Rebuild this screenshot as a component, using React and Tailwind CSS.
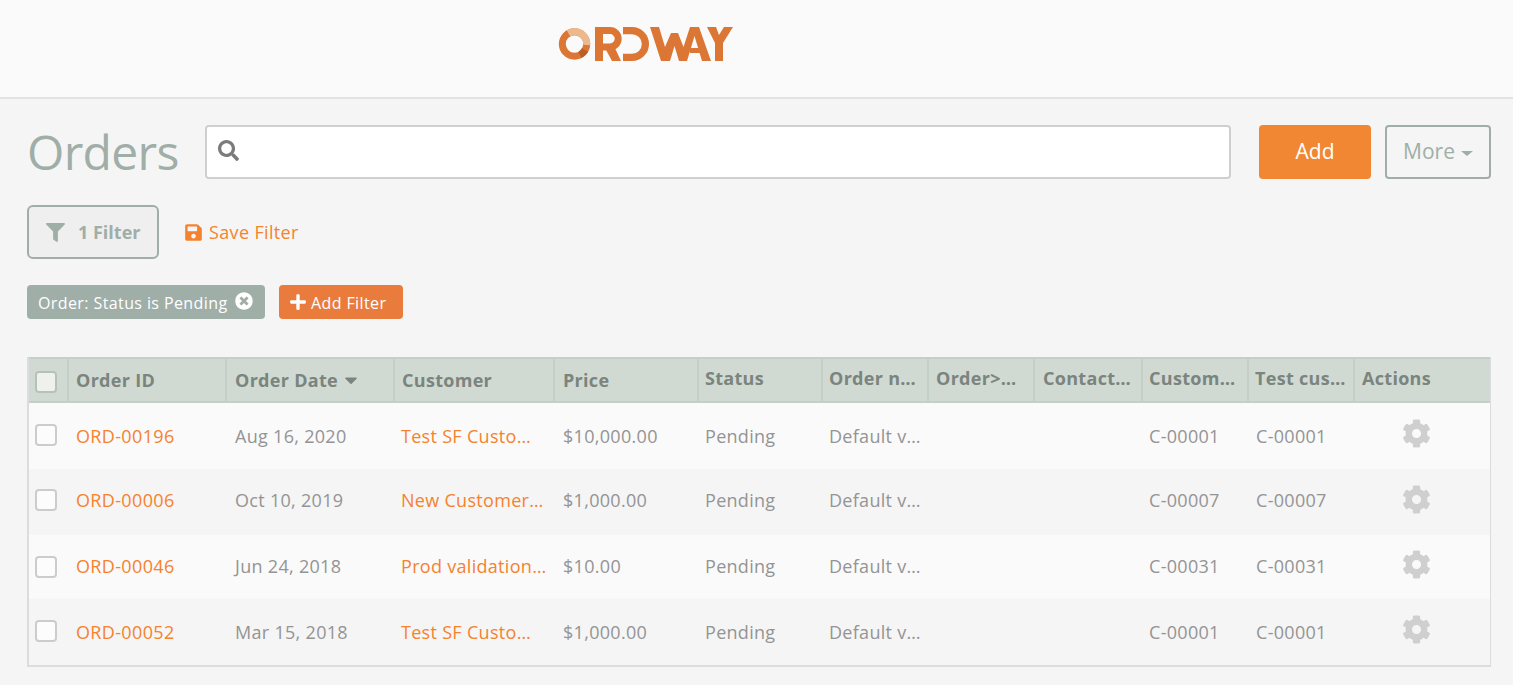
import React from "react";
import { FaSearch, FaFilter, FaSave, FaTimesCircle, FaPlus, FaCog, FaCaretDown } from "react-icons/fa";

const rows = [
  { id: "ORD-00196", date: "Aug 16, 2020", customer: "Test SF Customer 1", price: "$10,000.00", c: "C-00001", h: "h-[67px]", cell: "pb-0", box: "-mt-[2px]", gear: "-mt-[6px]" },
  { id: "ORD-00006", date: "Oct 10, 2019", customer: "New CustomerAccount", price: "$1,000.00", c: "C-00007", h: "h-[66px]", cell: "pb-[3px]", box: "-mt-[4px]", gear: "-mt-[6px]" },
  { id: "ORD-00046", date: "Jun 24, 2018", customer: "Prod validation customer", price: "$10.00", c: "C-00031", h: "h-[64px]", cell: "pb-[1px]", box: "-mt-[0px]", gear: "-mt-[6px]" },
  { id: "ORD-00052", date: "Mar 15, 2018", customer: "Test SF Customer 1", price: "$1,000.00", c: "C-00001", h: "h-[66px]", cell: "pt-[1px]", box: "-mt-[2px]", gear: "-mt-[6px]" },
];

const heads = [
  ["Order ID", "w-[158px]", "pl-[7px]"],
  ["Order Date", "w-[168px]", "pl-[8px]"],
  ["Customer", "w-[160px]", "pl-[7px]"],
  ["Price", "w-[144px]", "pl-[8px]"],
  ["Status", "w-[124px]", "pl-[6px]"],
  ["Order number", "w-[106px]", "pl-[6px]"],
  ["Order>Customer", "w-[106px]", "pl-[7px]"],
  ["Contact name", "w-[108px]", "pl-[8px]"],
  ["Customer ID", "w-[106px]", "pl-[6px]"],
  ["Test customer", "w-[106px]", "pl-[6px]"],
  ["Actions", "w-[136px]", "pl-[7px]"],
];

function Logo() {
  return (
    <svg width="176" height="35" viewBox="0 0 176 35" fill="none" aria-label="Ordway logo">
      <circle cx="16.5" cy="17" r="12.2" stroke="#dc7634" strokeWidth="7" />
      <path d="M10.5 6.4 A12.2 12.2 0 0 1 28.7 18" stroke="#ecb98f" strokeWidth="7" />
      <path d="M27 23 A12.2 12.2 0 0 1 22 28" stroke="#b96027" strokeWidth="7" />
      <rect x="37" y="0" width="8" height="34" fill="#dc7634" />
      <path d="M41 3.6 H52 A8.2 8.2 0 0 1 52 20 H45" stroke="#dc7634" strokeWidth="7" />
      <polygon points="47,21 56,19 63,34 54,34" fill="#dc7634" />
      <path d="M65 3.6 H74 A13.4 13.4 0 0 1 74 30.4 H65" stroke="#dc7634" strokeWidth="7.2" />
      <polygon points="92,0 101,0 107,20 113,6 120,6 125.5,20 132,0 141,0 153,34 144,34 136.5,9 129,34 121,34 116.5,19 112,34 103,34" fill="#dc7634" />
      <rect x="132" y="21" width="14" height="5" fill="#dc7634" />
      <polygon points="149,0 158,0 161,8 166,0 175,0 165,16 165,34 157,34 157,16" fill="#dc7634" />
    </svg>
  );
}

function Box({ header }) {
  return (
    <span
      className={`block w-[22px] h-[22px] rounded-[4px] border-2 ${
        header ? "border-[#b9c0ba] bg-[#eef1ee]" : "border-[#cccccc] bg-[#fcfcfc]"
      }`}
    />
  );
}

export default function App() {
  return (
    <div className="min-h-[685px] bg-[#f5f5f5] text-[18px] text-[#949494] font-['Open_Sans',sans-serif] overflow-hidden">
      <header className="h-[99px] bg-[#fafafa] border-b-2 border-[#e2e2e2] pl-[558px] pt-[27px]">
        <Logo />
      </header>

      <main className="px-[27px] pr-[22px] pt-[26px]">
        <div className="flex items-center h-[54px]">
          <h1 className="w-[178px] text-[48px] leading-[54px] tracking-[-0.7px] text-[#a0aea8]">Orders</h1>
          <div className="flex items-center w-[1026px] h-[54px] bg-white border-2 border-[#cfcfcf] rounded-[4px] pl-[11px]">
            <FaSearch className="text-[#7b7b7b] text-[21px] -mt-[4px]" />
          </div>
          <button className="ml-[28px] w-[112px] h-[54px] bg-[#f28733] text-white text-[21px] rounded-[4px]">Add</button>
          <button className="ml-[14px] w-[106px] h-[54px] border-2 border-[#a0aea8] text-[#a0aea8] text-[21px] rounded-[4px] flex items-center justify-center gap-[6px] bg-[#f4f5f4]">
            More
            <span className="mt-[2px] border-x-[6px] border-t-[5px] border-x-transparent border-t-[#a0aea8]" />
          </button>
        </div>

        <div className="flex items-center mt-[26px] h-[54px]">
          <button className="flex items-center w-[132px] h-[54px] border-2 border-[#a0aea8] bg-[#efefef] rounded-[6px] pl-[17px] text-[#a0aea8] font-bold">
            <FaFilter className="text-[19px]" />
            <span className="ml-[13px]">1 Filter</span>
          </button>
          <a className="flex items-center ml-[25px] text-[#f5822e] tracking-[0.35px]">
            <FaSave className="text-[19px]" />
            <span className="ml-[6px]">Save Filter</span>
          </a>
        </div>

        <div className="flex items-center mt-[26px] h-[34px] text-[16px] text-white tracking-[0.4px]">
          <span className="flex items-center w-[238px] h-[34px] bg-[#a0aea8] rounded-[4px] pl-[11px]">
            <span className="pt-[1px]">Order: Status is Pending</span>
            <FaTimesCircle className="ml-[7px] text-[18px] -mt-[2px]" />
          </span>
          <button className="flex items-center ml-[14px] w-[124px] h-[34px] bg-[#e97c3d] rounded-[4px] pl-[10px] tracking-[0.4px]">
            <FaPlus className="text-[18px] -mt-[1px]" />
            <span className="ml-[4px] pt-[1px]">Add Filter</span>
          </button>
        </div>

        <div className="mt-[38px] w-[1464px] border-2 border-t-0 border-[#dcdcdc]">
          <table className="table-fixed w-full border-collapse tracking-[0.3px]">
            <colgroup>
              <col className="w-[39px]" />
              {heads.map(([h, w]) => <col key={h} className={w} />)}
            </colgroup>
            <thead>
              <tr className="h-[44px] bg-[#d0dad2] text-[#7b847e] tracking-[0.3px]">
                <th className="border-y-2 border-[#c4d0c7] pl-[6px] pt-[3px] align-middle"><Box header /></th>
                {heads.map(([h, , pl], i) => (
                  <th
                    key={h}
                    className={`border-y-2 border-l-2 border-[#c4d0c7] ${pl} pr-[6px] text-left font-bold leading-[24px] ${i < 4 ? "pb-[1px]" : "pb-[5px]"}`}
                  >
                    <span className={`flex items-center ${i === 1 ? "gap-[3px]" : ""}`}>
                      <span className="truncate">{h}</span>
                      {i === 1 && <FaCaretDown className="text-[20px] shrink-0" />}
                    </span>
                  </th>
                ))}
              </tr>
            </thead>
            <tbody>
              {rows.map((r, i) => (
                <tr key={r.id} className={`${r.h} ${i % 2 ? "bg-[#f5f5f5]" : "bg-[#fafafa]"}`}>
                  <td className="pl-[6px]"><span className={`block ${r.box}`}><Box /></span></td>
                  <td className={`pl-[8px] text-[#f5822e] tracking-[0.35px] ${r.cell}`}>{r.id}</td>
                  <td className={`pl-[9px] ${r.cell}`}>{r.date}</td>
                  <td className={`pl-[7px] pr-[7px] text-[#f5822e] truncate ${r.cell}`}>{r.customer}</td>
                  <td className={`pl-[9px] ${r.cell}`}>{r.price}</td>
                  <td className={`pl-[7px] ${r.cell}`}>Pending</td>
                  <td className={`pl-[7px] pr-[6px] truncate ${r.cell}`}>Default value</td>
                  <td />
                  <td />
                  <td className={`pl-[7px] ${r.cell}`}>{r.c}</td>
                  <td className={`pl-[8px] ${r.cell}`}>{r.c}</td>
                  <td>
                    <span className={`flex justify-center pr-[12px] ${r.gear}`}>
                      <FaCog className="text-[29px] text-[#cfcfcf]" />
                    </span>
                  </td>
                </tr>
              ))}
            </tbody>
          </table>
        </div>
      </main>
    </div>
  );
}
